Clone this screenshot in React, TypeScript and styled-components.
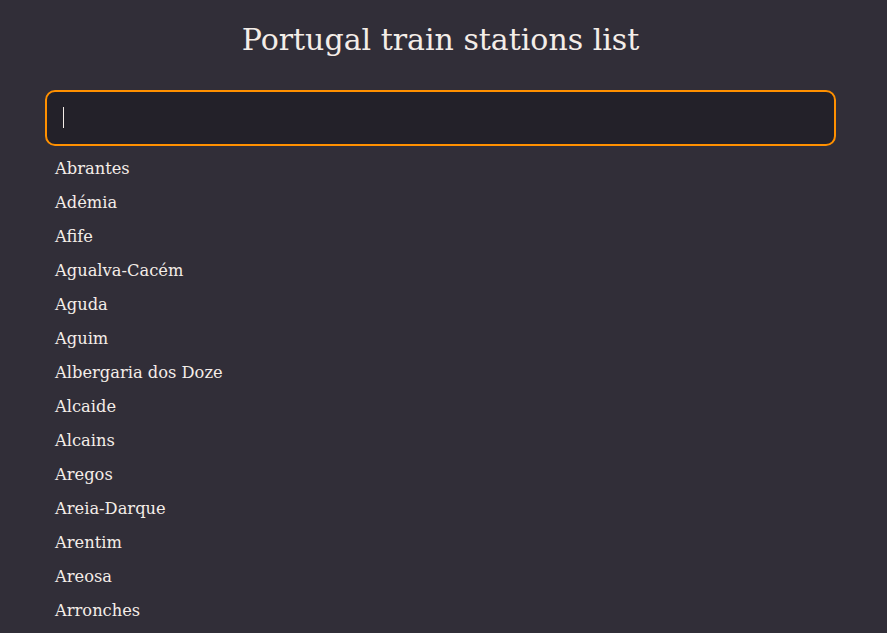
import React from "react";
import styled, { createGlobalStyle } from "styled-components";

const GlobalStyle = createGlobalStyle`
  * {
    box-sizing: border-box;
  }
  body {
    margin: 0;
    background: #312e38;
    color: #f4ede8;
    font-family: "Roboto Slab", "DejaVu Serif", serif;
    overflow: hidden;
  }
`;

const Page = styled.div`
  display: flex;
  flex-direction: column;
  align-items: center;
  padding: 18px 51px 0 45px;
`;

const Title = styled.h1`
  margin: 0 0 28px;
  font-size: 30px;
  font-weight: 400;
  line-height: 44px;
`;

const SearchField = styled.div`
  position: relative;
  width: 100%;
`;

const SearchInput = styled.input`
  display: block;
  width: 100%;
  height: 56px;
  padding: 0 16px;
  background: #232129;
  border: 2px solid #ff9000;
  border-radius: 10px;
  color: #f4ede8;
  caret-color: transparent;
  font-family: inherit;
  font-size: 16px;
  outline: none;
`;

const Caret = styled.span`
  position: absolute;
  left: 18px;
  top: 17px;
  width: 1px;
  height: 21px;
  background: #f4ede8;
  pointer-events: none;
`;

const StationList = styled.ul`
  width: 100%;
  margin: 6px 0 0;
  padding: 0 10px;
  list-style: none;
`;

const StationItem = styled.li`
  font-size: 16.3px;
  line-height: 34px;
`;

const stations = [
  "Abrantes",
  "Adémia",
  "Afife",
  "Agualva-Cacém",
  "Aguda",
  "Aguim",
  "Albergaria dos Doze",
  "Alcaide",
  "Alcains",
  "Aregos",
  "Areia-Darque",
  "Arentim",
  "Areosa",
  "Arronches",
];

const App: React.FunctionComponent = () => {
  return (
    <>
      <GlobalStyle />
      <Page>
        <Title>Portugal train stations list</Title>
        <SearchField>
          <SearchInput type="text" autoFocus />
          <Caret />
        </SearchField>
        <StationList>
          {stations.map((name) => (
            <StationItem key={name}>{name}</StationItem>
          ))}
        </StationList>
      </Page>
    </>
  );
};

export default App;
